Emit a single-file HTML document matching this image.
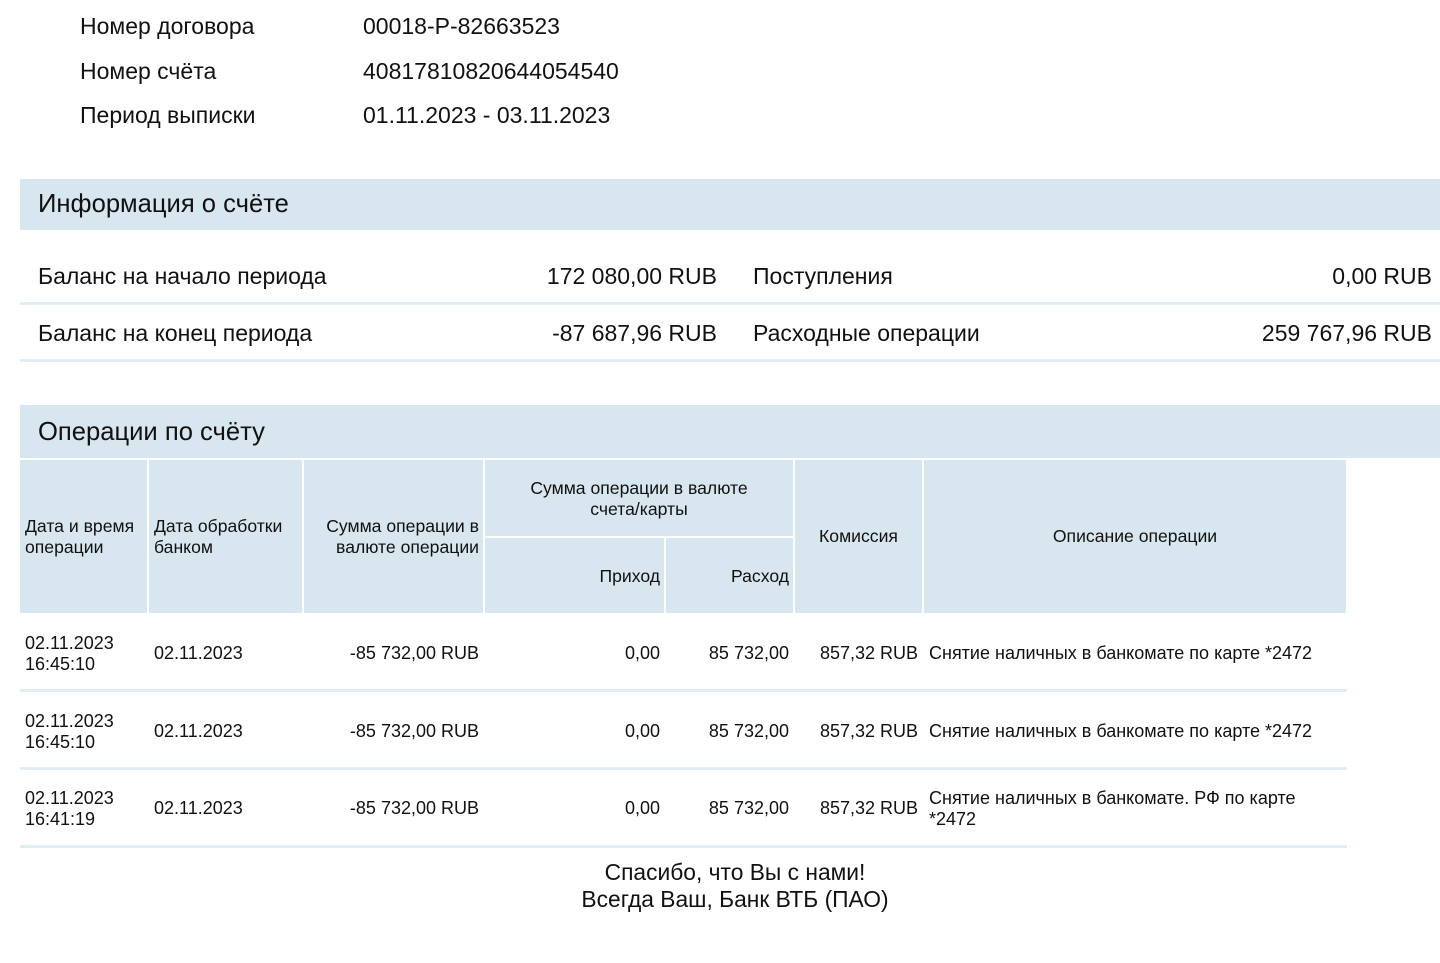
<!DOCTYPE html>
<html><head><meta charset="utf-8"><style>
body{margin:0;width:1440px;height:963px;background:#fff;position:relative;overflow:hidden;font-family:"Liberation Sans",Arial,sans-serif;color:#111}
.a{position:absolute;white-space:nowrap}
.t{font-size:23px}
.band{position:absolute;left:20px;width:1420px;background:#d7e6ef}
.hl{position:absolute;height:3px;background:#e2edf3}
.hc{position:absolute;background:#d7e6ef;font-size:17.6px;line-height:21px}
.c{font-size:18px;line-height:21px}
.r{text-align:right}
</style></head><body>
<div class="a t" style="left:80px;top:13px">Номер договора</div>
<div class="a t" style="left:363px;top:13px">00018-P-82663523</div>
<div class="a t" style="left:80px;top:58px">Номер счёта</div>
<div class="a t" style="left:363px;top:58px">40817810820644054540</div>
<div class="a t" style="left:80px;top:102px">Период выписки</div>
<div class="a t" style="left:363px;top:102px">01.11.2023 - 03.11.2023</div>

<div class="band" style="top:179px;height:51px"></div>
<div class="a" style="left:38px;top:190px;font-size:25.6px">Информация о счёте</div>
<div class="a t" style="left:38px;top:263px">Баланс на начало периода</div>
<div class="a t r" style="right:723px;top:263px">172 080,00 RUB</div>
<div class="a t" style="left:753px;top:263px">Поступления</div>
<div class="a t r" style="right:8px;top:263px">0,00 RUB</div>
<div class="hl" style="left:20px;width:1420px;top:302px"></div>
<div class="a t" style="left:38px;top:320px">Баланс на конец периода</div>
<div class="a t r" style="right:723px;top:320px">-87 687,96 RUB</div>
<div class="a t" style="left:753px;top:320px">Расходные операции</div>
<div class="a t r" style="right:8px;top:320px">259 767,96 RUB</div>
<div class="hl" style="left:20px;width:1420px;top:359px"></div>

<div class="band" style="top:405px;height:53px"></div>
<div class="a" style="left:38px;top:418px;font-size:25.6px">Операции по счёту</div>

<div class="hc" style="left:20px;top:460px;width:127px;height:153px"><div style="padding:56px 0 0 5px">Дата и время<br>операции</div></div>
<div class="hc" style="left:149px;top:460px;width:153px;height:153px"><div style="padding:56px 0 0 5px">Дата обработки<br>банком</div></div>
<div class="hc" style="left:304px;top:460px;width:179px;height:153px"><div style="padding:56px 4px 0 0;text-align:right">Сумма операции в<br>валюте операции</div></div>
<div class="hc" style="left:485px;top:460px;width:308px;height:76px"><div style="padding:18px 0 0;text-align:center">Сумма операции в валюте<br>счета/карты</div></div>
<div class="hc" style="left:485px;top:538px;width:179px;height:75px"><div style="padding:28px 4px 0 0;text-align:right">Приход</div></div>
<div class="hc" style="left:666px;top:538px;width:127px;height:75px"><div style="padding:28px 4px 0 0;text-align:right">Расход</div></div>
<div class="hc" style="left:795px;top:460px;width:127px;height:153px"><div style="padding:66px 0 0;text-align:center">Комиссия</div></div>
<div class="hc" style="left:924px;top:460px;width:422px;height:153px"><div style="padding:66px 0 0;text-align:center">Описание операции</div></div>

<div class="a c" style="left:25px;top:633px">02.11.2023<br>16:45:10</div>
<div class="a c" style="left:154px;top:643px">02.11.2023</div>
<div class="a c r" style="right:961px;top:643px">-85 732,00 RUB</div>
<div class="a c r" style="right:780px;top:643px">0,00</div>
<div class="a c r" style="right:651px;top:643px">85 732,00</div>
<div class="a c r" style="right:522px;top:643px">857,32 RUB</div>
<div class="a c" style="left:929px;top:643px">Снятие наличных в банкомате по карте *2472</div>
<div class="hl" style="left:20px;width:1327px;top:689px"></div>

<div class="a c" style="left:25px;top:711px">02.11.2023<br>16:45:10</div>
<div class="a c" style="left:154px;top:721px">02.11.2023</div>
<div class="a c r" style="right:961px;top:721px">-85 732,00 RUB</div>
<div class="a c r" style="right:780px;top:721px">0,00</div>
<div class="a c r" style="right:651px;top:721px">85 732,00</div>
<div class="a c r" style="right:522px;top:721px">857,32 RUB</div>
<div class="a c" style="left:929px;top:721px">Снятие наличных в банкомате по карте *2472</div>
<div class="hl" style="left:20px;width:1327px;top:767px"></div>

<div class="a c" style="left:25px;top:788px">02.11.2023<br>16:41:19</div>
<div class="a c" style="left:154px;top:798px">02.11.2023</div>
<div class="a c r" style="right:961px;top:798px">-85 732,00 RUB</div>
<div class="a c r" style="right:780px;top:798px">0,00</div>
<div class="a c r" style="right:651px;top:798px">85 732,00</div>
<div class="a c r" style="right:522px;top:798px">857,32 RUB</div>
<div class="a c" style="left:929px;top:788px">Снятие наличных в банкомате. РФ по карте<br>*2472</div>
<div class="hl" style="left:20px;width:1327px;top:845px"></div>

<div class="a" style="left:0;width:1470px;text-align:center;top:859px;font-size:22.8px;line-height:27px">Спасибо, что Вы с нами!<br>Всегда Ваш, Банк ВТБ (ПАО)</div>
</body></html>
